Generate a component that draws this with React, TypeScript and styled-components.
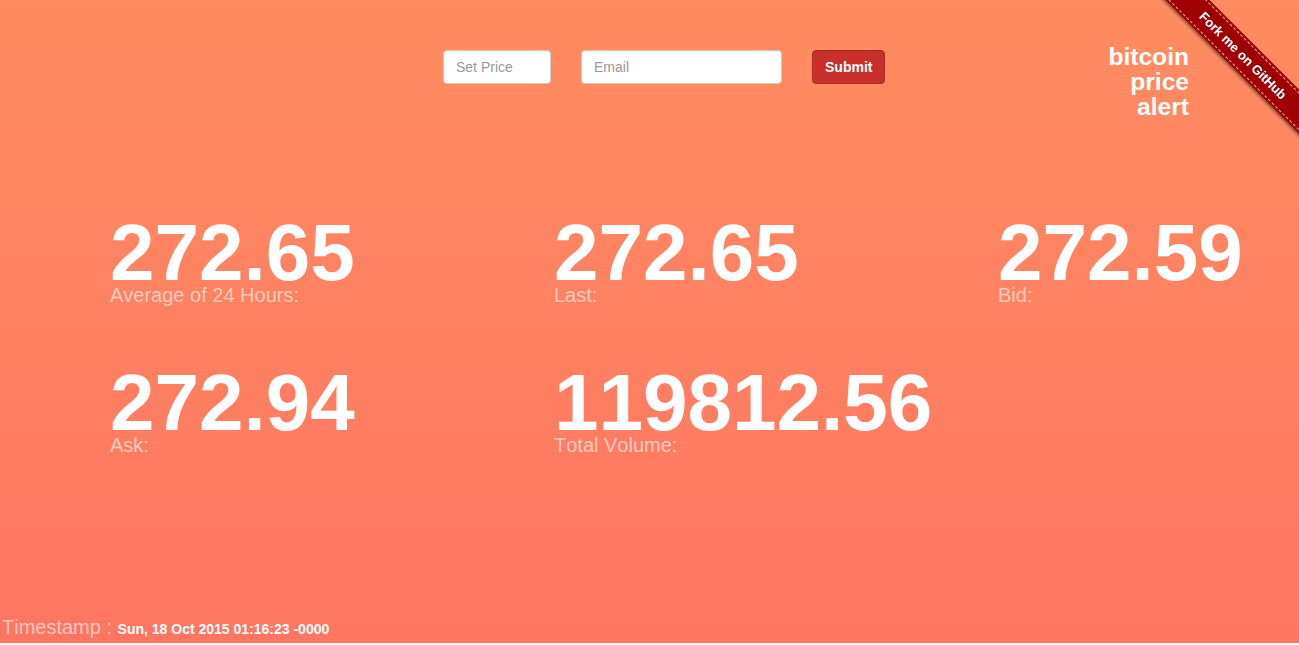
import React from "react";
import styled, { createGlobalStyle } from "styled-components";

const GlobalStyle = createGlobalStyle`
  html, body {
    margin: 0;
    padding: 0;
    background: #ffffff;
  }
  body {
    font-family: "Liberation Sans", Arial, Helvetica, sans-serif;
    font-kerning: none;
  }
  * { box-sizing: border-box; }
`;

const Page = styled.div`
  position: relative;
  height: 643px;
  overflow: hidden;
  display: flex;
  flex-direction: column;
  background: linear-gradient(to bottom, #ff8d61 0%, #ff7562 100%);
  color: #ffffff;
`;

const Header = styled.header`
  display: flex;
  align-items: flex-start;
  padding: 44px 110px 0 443px;
`;

const Form = styled.form`
  display: flex;
  align-items: center;
  gap: 30px;
  margin: 6px 0 0 0;
`;

const Input = styled.input<{ $w: number }>`
  width: ${(p) => p.$w}px;
  height: 34px;
  padding: 6px 12px;
  font-family: "Liberation Sans", Arial, sans-serif;
  font-size: 14px;
  color: #555;
  background: #ffffff;
  border: 1px solid #cccccc;
  border-radius: 4px;
  box-shadow: inset 0 1px 1px rgba(0, 0, 0, 0.075);
  outline: none;
  &::placeholder {
    color: #999999;
  }
`;

const SubmitButton = styled.button`
  height: 34px;
  padding: 6px 12px;
  font-family: "Liberation Sans", Arial, sans-serif;
  font-size: 14px;
  font-weight: bold;
  color: #ffffff;
  background: #c9302c;
  border: 1px solid #ac2925;
  border-radius: 4px;
  cursor: pointer;
`;

const Title = styled.h1`
  margin: 0 0 0 auto;
  font-size: 24.6px;
  line-height: 25px;
  font-weight: bold;
  text-align: right;
  color: #ffffff;
`;

const Stats = styled.section`
  display: grid;
  grid-template-columns: repeat(3, 444px);
  row-gap: 66px;
  padding-left: 110px;
  margin-top: 103px;
`;

const Stat = styled.div`
  display: flex;
  flex-direction: column;
`;

const Value = styled.div`
  font-size: 80px;
  line-height: 62px;
  font-weight: bold;
  color: #ffffff;
  white-space: nowrap;
`;

const Label = styled.div`
  font-size: 20px;
  line-height: 22px;
  color: rgba(255, 255, 255, 0.6);
`;

const Footer = styled.footer`
  margin-top: auto;
  padding: 0 0 3px 2px;
  font-size: 20px;
  line-height: 22px;
  color: rgba(255, 255, 255, 0.6);
  white-space: nowrap;
`;

const Stamp = styled.strong`
  font-size: 14px;
  font-weight: bold;
  color: #ffffff;
`;

const RibbonWrap = styled.a`
  position: absolute;
  top: 0;
  right: 0;
  width: 149px;
  height: 149px;
  overflow: hidden;
  text-decoration: none;
`;

const Ribbon = styled.span`
  position: absolute;
  left: -19px;
  top: 40px;
  width: 224px;
  height: 31px;
  transform: rotate(45deg);
  background: #a00000;
  box-shadow: 0 2px 3px rgba(0, 0, 0, 0.45);
  display: flex;
  align-items: center;
  justify-content: center;
  font-family: "Liberation Sans", Arial, sans-serif;
  font-size: 13px;
  font-weight: bold;
  color: #ffffff;
  text-shadow: 0 -1px 0 rgba(0, 0, 0, 0.5);
  &::before,
  &::after {
    content: "";
    position: absolute;
    left: 0;
    right: 0;
    height: 0;
    border-top: 1px dashed rgba(255, 255, 255, 0.7);
  }
  &::before { top: 2px; }
  &::after { bottom: 2px; }
`;

const stats = [
  { value: "272.65", label: "Average of 24 Hours:" },
  { value: "272.65", label: "Last:" },
  { value: "272.59", label: "Bid:" },
  { value: "272.94", label: "Ask:" },
  { value: "119812.56", label: "Total Volume:" },
];

export default function App() {
  return (
    <>
      <GlobalStyle />
      <Page>
        <Header>
          <Form onSubmit={(e) => e.preventDefault()}>
            <Input $w={108} type="text" placeholder="Set Price" />
            <Input $w={201} type="email" placeholder="Email" />
            <SubmitButton type="submit">Submit</SubmitButton>
          </Form>
          <Title>
            bitcoin
            <br />
            price
            <br />
            alert
          </Title>
        </Header>
        <Stats>
          {stats.map((s, i) => (
            <Stat key={i}>
              <Value>{s.value}</Value>
              <Label>{s.label}</Label>
            </Stat>
          ))}
        </Stats>
        <Footer>
          Timestamp : <Stamp>Sun, 18 Oct 2015 01:16:23 -0000</Stamp>
        </Footer>
        <RibbonWrap href="#">
          <Ribbon>Fork me on GitHub</Ribbon>
        </RibbonWrap>
      </Page>
    </>
  );
}
